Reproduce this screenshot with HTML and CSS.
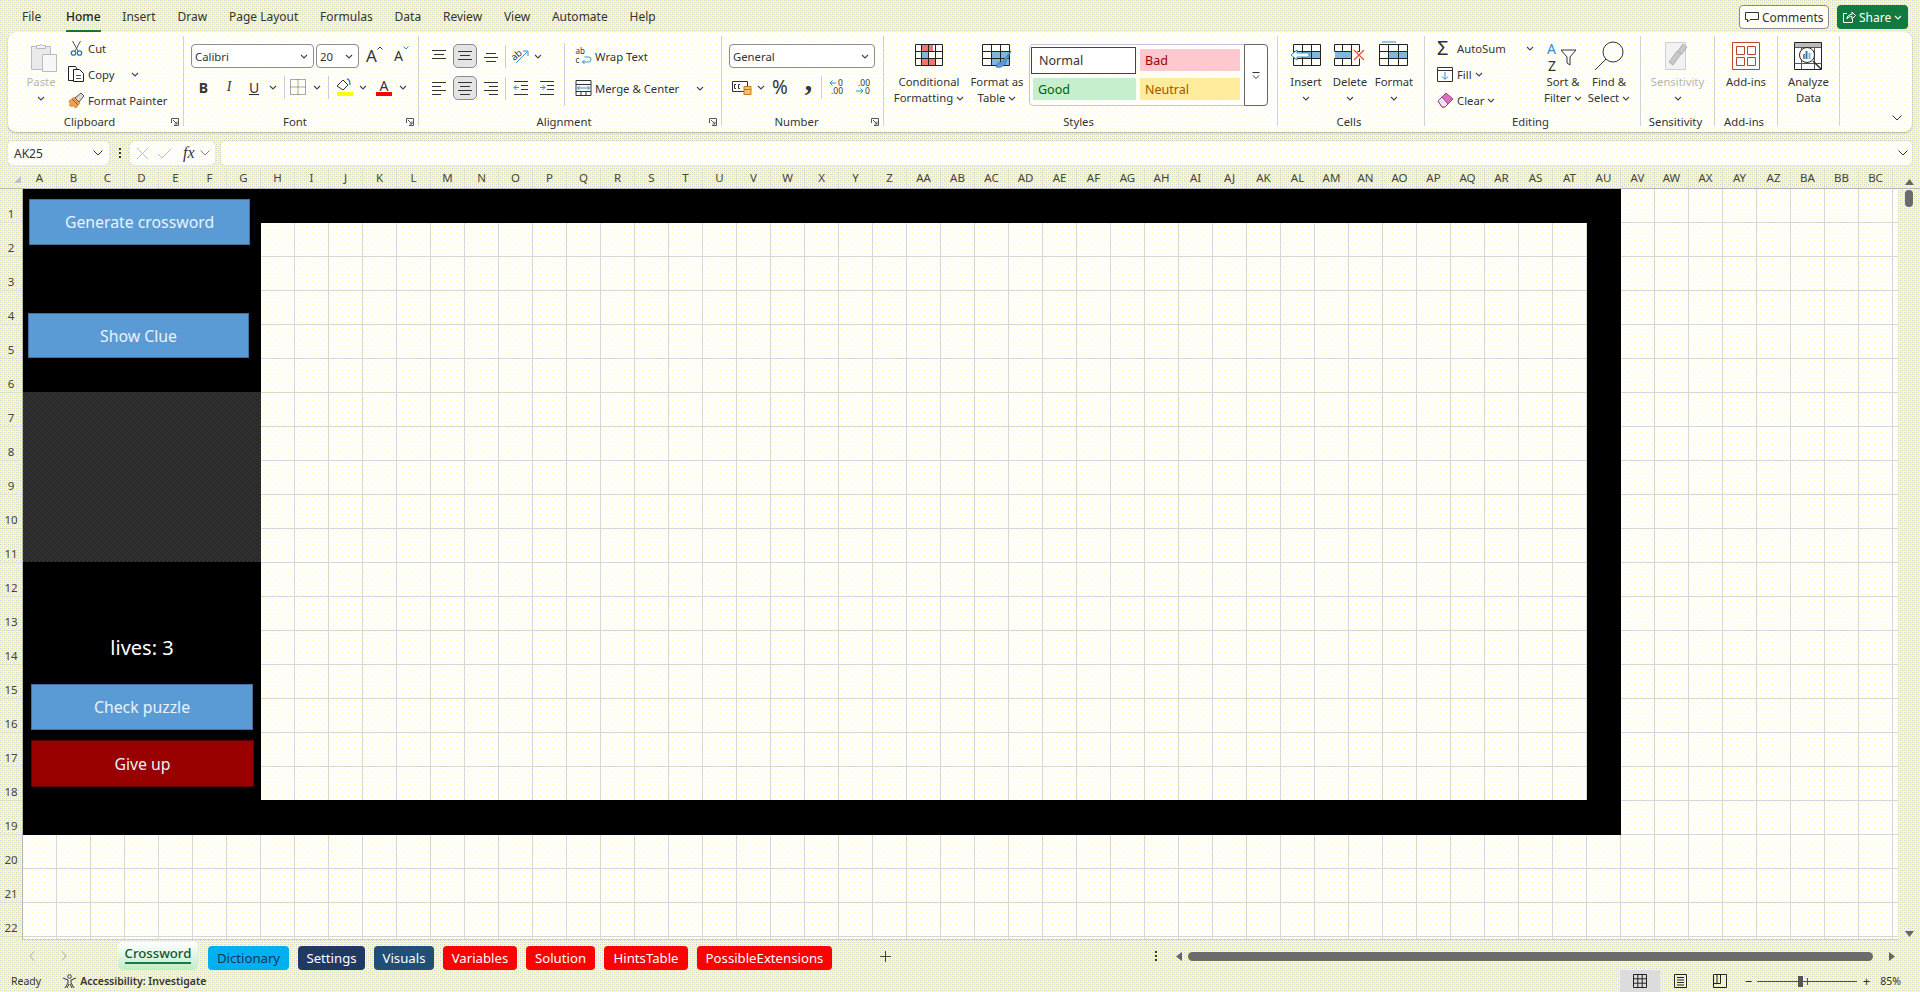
FILE: index.html
```html
<!DOCTYPE html>
<html>
<head>
	<title>Crossword - Excel</title>
	<link rel="stylesheet" href="styles.css">
</head>
<body>
<svg class="sprite" width="0" height="0">
	<symbol id="chev" viewBox="0 0 8 5"><path d="M1 1l3 3 3-3" fill="none" stroke="#444" stroke-width="1.1"/></symbol>
	<symbol id="launch" viewBox="0 0 8 8"><path d="M.5 5V.5H7.500V7.500H3M2 2l4 4M6 3.500V6H3.500" fill="none" stroke="#555"/></symbol>
	<symbol id="lines-top" viewBox="0 0 14 14"><path d="M0 1.500h14M2 5.500h10M0 9.500h14" stroke="#333"/></symbol>
	<symbol id="lines-mid" viewBox="0 0 14 14"><path d="M0 2.500h14M2 6.500h10M0 10.500h14" stroke="#333"/></symbol>
	<symbol id="lines-bot" viewBox="0 0 14 14"><path d="M2 4.500h10M0 8.500h14M2 12.500h10" stroke="#333"/></symbol>
	<symbol id="lines-left" viewBox="0 0 14 14"><path d="M0 1.500h14M0 5.500h9M0 9.500h14M0 13.500h9" stroke="#333"/></symbol>
	<symbol id="lines-center" viewBox="0 0 14 14"><path d="M0 1.500h14M2 5.500h10M0 9.500h14M2 13.500h10" stroke="#333"/></symbol>
	<symbol id="lines-right" viewBox="0 0 14 14"><path d="M0 1.500h14M5 5.500h9M0 9.500h14M5 13.500h9" stroke="#333"/></symbol>
</svg>

<div class="menu-bar">
	<nav class="menu">
		<span>File</span>
		<span class="menu-active">Home</span>
		<span>Insert</span>
		<span>Draw</span>
		<span>Page Layout</span>
		<span>Formulas</span>
		<span>Data</span>
		<span>Review</span>
		<span>View</span>
		<span>Automate</span>
		<span>Help</span>
	</nav>
	<div class="menu-actions">
		<div class="comments">
			<svg width="14" height="13" viewBox="0 0 14 13"><path d="M.5 1.500h13v7H5L2.500 11V8.500h-2z" fill="none" stroke="#333"/></svg>
			Comments
		</div>
		<div class="share">
			<svg width="14" height="14" viewBox="0 0 14 14"><path d="M5 3.500H1.500v9h9V9M5 9c0-3 2-4.500 5-4.500V2l3.500 3.500L10 9V6.500C8 6.500 6 7 5 9z" fill="none" stroke="#fff"/></svg>
			Share
			<svg class="chev" viewBox="0 0 8 5"><path d="M1 1l3 3 3-3" fill="none" stroke="#fff" stroke-width="1.100"/></svg>
		</div>
	</div>
</div>

<div class="ribbon">
	<!-- Clipboard -->
	<section class="group group-clipboard">
		<div class="group-body">
			<div class="big big-paste is-off">
				<svg width="28" height="33" viewBox="0 0 28 33"><path d="M1.500 5.500h19v23h-19z" fill="#eaeaea" stroke="#bbb"/><path d="M6.500 7.500v-3h3a2 2 0 0 1 3 0h3v3z" fill="#f4f4f4" stroke="#bbb"/><path d="M12.500 13.500h14v17h-14z" fill="#f7f7f7" stroke="#bbb"/></svg>
				<span>Paste</span>
				<svg class="chev" viewBox="0 0 8 5"><use href="#chev"/></svg>
			</div>
			<div class="small-col">
				<div class="small">
					<svg class="small-ico" width="16" height="17" viewBox="0 0 16 17"><path d="M4 1l5.500 10M12 1L6.500 11" stroke="#555" fill="none"/><circle cx="5" cy="13" r="2.200" fill="none" stroke="#2f78b5" stroke-width="1.300"/><circle cx="11" cy="13" r="2.200" fill="none" stroke="#2f78b5" stroke-width="1.300"/></svg>
					Cut
				</div>
				<div class="small">
					<svg class="small-ico" width="17" height="16" viewBox="0 0 17 16"><path d="M5.500 14.500h-5V.5h7l2 3" fill="none" stroke="#222"/><path d="M5.500 3.500h6l4 4v8h-10z" fill="#fff" stroke="#222"/><path d="M8 9.500h5M8 12.500h5" stroke="#555"/></svg>
					Copy
					<svg class="chev chev-copy" viewBox="0 0 8 5"><use href="#chev"/></svg>
				</div>
				<div class="small">
					<svg class="small-ico" width="17" height="17" viewBox="0 0 17 17"><path d="M1 9l5-4 6 6-4 5c-2-.5-2-2-3-2s-2 1-3 0 0-1.500 0-2-1-2-1-3z" fill="#eda04f" stroke="#c77a2a" stroke-width=".6"/><path d="M7 6l6-5 3 3-5 6z" fill="#d9d9d9" stroke="#555"/><path d="M4 7l6 6" stroke="#8a5a2b"/></svg>
					Format Painter
				</div>
			</div>
		</div>
		<div class="group-label"><span>Clipboard</span><svg class="launch"><use href="#launch"/></svg></div>
	</section>

	<!-- Font -->
	<section class="group group-font">
		<div class="group-body group-stack">
			<div class="font-row1">
				<div class="select select-font">Calibri<svg class="chev" viewBox="0 0 8 5"><use href="#chev"/></svg></div>
				<div class="select select-size">20<svg class="chev" viewBox="0 0 8 5"><use href="#chev"/></svg></div>
				<span class="grow-a">A<svg width="6" height="4" viewBox="0 0 6 4"><path d="M.5 3.500L3 1l2.500 2.500" fill="none" stroke="#333"/></svg></span>
				<span class="shrink-a">A<svg width="6" height="4" viewBox="0 0 6 4"><path d="M.5.5L3 3 5.500.5" fill="none" stroke="#2f8fd0"/></svg></span>
			</div>
			<div class="font-row2">
				<b class="tool">B</b>
				<i class="tool tool-serif">I</i>
				<span class="tool tool-u">U</span>
				<span class="tool"><svg class="chev" viewBox="0 0 8 5"><use href="#chev"/></svg></span>
				<span class="tool"><i class="vsep"></i></span>
				<span class="tool"><svg width="16" height="16" viewBox="0 0 16 16"><path d="M.5.5h15v15H.5zM8 .5v15M.5 8h15" fill="none" stroke="#555" stroke-dasharray="1 1"/></svg></span>
				<span class="tool"><svg class="chev" viewBox="0 0 8 5"><use href="#chev"/></svg></span>
				<span class="tool"><i class="vsep"></i></span>
				<span class="tool"><svg width="17" height="18" viewBox="0 0 17 18"><path d="M1 8l6-6 5 5-5 5z" fill="#fff" stroke="#333"/><path d="M11 1c3 0 3 4 3 6" fill="none" stroke="#2f78b5" stroke-width="1.300"/><path d="M1 14h16v4H1z" fill="#ff0"/></svg></span>
				<span class="tool"><svg class="chev" viewBox="0 0 8 5"><use href="#chev"/></svg></span>
				<span class="tool tool-color">A<i></i></span>
				<span class="tool"><svg class="chev" viewBox="0 0 8 5"><use href="#chev"/></svg></span>
			</div>
		</div>
		<div class="group-label"><span>Font</span><svg class="launch"><use href="#launch"/></svg></div>
	</section>

	<!-- Alignment -->
	<section class="group group-align">
		<div class="group-body">
			<div class="align-grid">
				<span class="tool"><svg class="ln"><use href="#lines-top"/></svg></span>
				<span class="tool tool-on"><svg class="ln"><use href="#lines-mid"/></svg></span>
				<span class="tool"><svg class="ln"><use href="#lines-bot"/></svg></span>
				<span class="tool"><i class="vsep"></i></span>
				<span class="tool"><svg width="17" height="16" viewBox="0 0 17 16"><text x="0" y="11" class="ico-text" transform="rotate(-40 4 9)">ab</text><path d="M4 15L15 4M11 3h5v5" fill="none" stroke="#2f8fd0"/></svg></span>
				<span class="tool tool-start"><svg class="chev" viewBox="0 0 8 5"><use href="#chev"/></svg></span>
				<span class="tool"><svg class="ln"><use href="#lines-left"/></svg></span>
				<span class="tool tool-on"><svg class="ln"><use href="#lines-center"/></svg></span>
				<span class="tool"><svg class="ln"><use href="#lines-right"/></svg></span>
				<span class="tool"><i class="vsep"></i></span>
				<span class="tool"><svg width="15" height="14" viewBox="0 0 15 14"><path d="M1 .5h14M8 4.500h7M8 8.500h7M1 13.500h14" stroke="#333"/><path d="M6 6.500H1M3.500 4L1 6.500 3.500 9" fill="none" stroke="#2f8fd0"/></svg></span>
				<span class="tool"><svg width="15" height="14" viewBox="0 0 15 14"><path d="M1 .5h14M8 4.500h7M8 8.500h7M1 13.500h14" stroke="#333"/><path d="M1 6.500h5M3.500 4L6 6.500 3.500 9" fill="none" stroke="#2f8fd0"/></svg></span>
			</div>
			<i class="group-sep"></i>
			<div class="wrap-col">
				<div class="small">
					<svg class="small-ico" width="16" height="16" viewBox="0 0 16 16"><text x="0" y="6" class="ico-wrap">ab</text><text x="0" y="15" class="ico-wrap">c</text><path d="M9 9h4a2 2 0 0 1 0 5H7M9 12l-2 2 2 2" fill="none" stroke="#2f8fd0"/></svg>
					Wrap Text
				</div>
				<div class="small">
					<svg class="small-ico" width="16" height="16" viewBox="0 0 16 16"><path d="M.5.5h15v15H.5zM.5 4.500h15M.5 11.500h15M5.500 11.500v4M10.500 11.500v4" fill="#fff" stroke="#333"/><path d="M2 8h12M4 6L2 8l2 2M12 6l2 2-2 2" fill="none" stroke="#2f8fd0"/></svg>
					Merge &amp; Center
					<svg class="chev chev-merge" viewBox="0 0 8 5"><use href="#chev"/></svg>
				</div>
			</div>
		</div>
		<div class="group-label"><span>Alignment</span><svg class="launch"><use href="#launch"/></svg></div>
	</section>

	<!-- Number -->
	<section class="group group-number">
		<div class="group-body group-stack">
			<div class="select select-number">General<svg class="chev" viewBox="0 0 8 5"><use href="#chev"/></svg></div>
			<div class="number-row">
				<span class="tool"><svg width="20" height="16" viewBox="0 0 20 16"><path d="M.5 2.500h15v10H.5z" fill="#fff" stroke="#333"/><path d="M4 5.500H2.500v4H4M8 5.500H6.500v4H8" fill="none" stroke="#333"/><path d="M12 7.500h7v8h-7z" fill="#f5c16c" stroke="#c87a1e"/><path d="M12 10.500h7" stroke="#c87a1e"/></svg></span>
				<span class="tool"><svg class="chev" viewBox="0 0 8 5"><use href="#chev"/></svg></span>
				<span class="tool tool-percent">%</span>
				<span class="tool tool-comma">,</span>
				<span class="tool"><i class="vsep"></i></span>
				<span class="tool"><svg width="16" height="16" viewBox="0 0 16 16"><path d="M7 4H1M3.500 1.500L1 4l2.500 2.500" fill="none" stroke="#2f8fd0"/><text x="9" y="7" class="ico-num">0</text><text x="2" y="15" class="ico-num">.00</text></svg></span>
				<span class="tool"><svg width="16" height="16" viewBox="0 0 16 16"><text x="3" y="7" class="ico-num">.00</text><path d="M1 12h7M5.500 9.500L8 12l-2.500 2.500" fill="none" stroke="#2f8fd0"/><text x="10" y="15" class="ico-num">0</text></svg></span>
			</div>
		</div>
		<div class="group-label"><span>Number</span><svg class="launch"><use href="#launch"/></svg></div>
	</section>

	<!-- Styles -->
	<section class="group group-styles">
		<div class="group-body">
			<div class="big big-cond">
				<svg width="28" height="33" viewBox="0 0 28 33"><path d="M6 3h12v7H6zM6 17h14v8H6z" fill="#f0776e"/><path d="M6 10h8v7H6z" fill="#7fb7de"/><path d="M.5 3.500h27v21H.5zM.5 10.500h27M.5 17.500h27M6.500 3.500v21M13.500 3.500v21M20.500 3.500v21" fill="none" stroke="#222"/></svg>
				<span>Conditional</span>
				<span>Formatting<svg class="chev chev-in" viewBox="0 0 8 5"><use href="#chev"/></svg></span>
			</div>
			<div class="big big-table">
				<svg width="30" height="33" viewBox="0 0 30 33"><path d="M10 10h18v14H10z" fill="#7fb7de"/><path d="M.5 3.500h27v21H.5zM.5 10.500h27M.5 17.500h27M9.500 3.500v21M18.500 3.500v21" fill="none" stroke="#222"/><path d="M14 26c1-5 4-5 6-5l9-11-6 13c-2 3-6 4-9 3z" fill="#5b9bd5" stroke="#2f6da3" stroke-width=".7"/></svg>
				<span>Format as</span>
				<span>Table<svg class="chev chev-in" viewBox="0 0 8 5"><use href="#chev"/></svg></span>
			</div>
			<div class="gallery">
				<div class="gallery-cells">
					<div class="style style-normal">Normal</div>
					<div class="style style-bad">Bad</div>
					<div class="style style-good">Good</div>
					<div class="style style-neutral">Neutral</div>
				</div>
				<div class="gallery-more"><svg width="8" height="8" viewBox="0 0 8 8"><path d="M.5.5h7M1 3.500l3 3 3-3" fill="none" stroke="#333"/></svg></div>
			</div>
		</div>
		<div class="group-label"><span>Styles</span></div>
	</section>

	<!-- Cells -->
	<section class="group group-cells">
		<div class="group-body">
			<div class="big">
				<svg width="32" height="33" viewBox="0 0 32 33"><path d="M11 10h20v7H11z" fill="#7fb7de"/><path d="M3.500 3.500h27v21h-27zM3.500 10.500h27M3.500 17.500h27M12.500 3.500v21M21.500 3.500v21" fill="none" stroke="#222"/><path d="M1 14l6-5v3h12v4H7v3z" fill="#fff" stroke="#2f8fd0"/></svg>
				<span>Insert</span>
				<svg class="chev" viewBox="0 0 8 5"><use href="#chev"/></svg>
			</div>
			<div class="big">
				<svg width="32" height="33" viewBox="0 0 32 33"><path d="M1 10h17v7H1z" fill="#7fb7de"/><path d="M.5 3.500h25v7h-2M.5 3.500v7h17v7H.5v7h25v-7M8.500 3.500v7M17.500 3.500v7M8.500 17.500v7M17.500 17.500v7" fill="none" stroke="#222"/><path d="M20 9l10 10M30 9L20 19" stroke="#e8503f" stroke-width="1.300"/></svg>
				<span>Delete</span>
				<svg class="chev" viewBox="0 0 8 5"><use href="#chev"/></svg>
			</div>
			<div class="big">
				<svg width="30" height="33" viewBox="0 0 30 33"><path d="M3 1h14" stroke="#2f8fd0"/><path d="M10 10h19v7H10z" fill="#7fb7de"/><path d="M.5 3.500h28v21H.5zM.5 10.500h28M.5 17.500h28M9.500 3.500v21M19.500 3.500v21" fill="none" stroke="#222"/></svg>
				<span>Format</span>
				<svg class="chev" viewBox="0 0 8 5"><use href="#chev"/></svg>
			</div>
		</div>
		<div class="group-label"><span>Cells</span></div>
	</section>

	<!-- Editing -->
	<section class="group group-editing">
		<div class="group-body">
			<div class="small-col small-col-edit">
				<div class="small">
					<span class="small-ico sigma">&Sigma;</span>
					AutoSum
					<svg class="chev chev-sum" viewBox="0 0 8 5"><use href="#chev"/></svg>
				</div>
				<div class="small">
					<svg class="small-ico" width="17" height="15" viewBox="0 0 17 15"><path d="M.5.5h15v14H.5z" fill="#fff" stroke="#333"/><path d="M.5 3.500h15" stroke="#333"/><path d="M8 5v7M5 9.500l3 3 3-3" fill="none" stroke="#2f8fd0"/></svg>
					Fill<svg class="chev chev-in" viewBox="0 0 8 5"><use href="#chev"/></svg>
				</div>
				<div class="small">
					<svg class="small-ico" width="17" height="16" viewBox="0 0 17 16"><path d="M1 9l8-8 7 6-8 8H5z" fill="#d96fc0" stroke="#9a3f8c"/><path d="M1 9l4-4 6 7-3 3H5z" fill="#f0e6f0" stroke="#9a3f8c"/></svg>
					Clear<svg class="chev chev-in" viewBox="0 0 8 5"><use href="#chev"/></svg>
				</div>
			</div>
			<div class="big big-narrow">
				<svg width="32" height="33" viewBox="0 0 32 33"><text x="0" y="13" class="ico-az ico-az-a">A</text><text x="1" y="30" class="ico-az">Z</text><path d="M14 9h15l-6 7v8l-3-2v-6z" fill="#fff" stroke="#333"/></svg>
				<span>Sort &amp;</span>
				<span>Filter<svg class="chev chev-in" viewBox="0 0 8 5"><use href="#chev"/></svg></span>
			</div>
			<div class="big big-narrow">
				<svg width="32" height="33" viewBox="0 0 32 33"><circle cx="20" cy="11" r="10" fill="none" stroke="#333"/><path d="M13 18L2 29" stroke="#333"/></svg>
				<span>Find &amp;</span>
				<span>Select<svg class="chev chev-in" viewBox="0 0 8 5"><use href="#chev"/></svg></span>
			</div>
		</div>
		<div class="group-label"><span>Editing</span></div>
	</section>

	<!-- Sensitivity -->
	<section class="group group-sens">
		<div class="group-body">
			<div class="big is-off">
				<svg width="30" height="33" viewBox="0 0 30 33"><path d="M2.500 1.500h20v27h-20z" fill="#f2f2f2" stroke="#cfcfd8"/><path d="M6 21l8-11 4 3-8 11zM15 10l5-7 4 3-5 7z" fill="#c9c9c9" stroke="#b0b0b0"/></svg>
				<span>Sensitivity</span>
				<svg class="chev" viewBox="0 0 8 5"><use href="#chev"/></svg>
			</div>
		</div>
		<div class="group-label"><span>Sensitivity</span></div>
	</section>

	<!-- Add-ins -->
	<section class="group group-addins">
		<div class="group-body">
			<div class="big">
				<svg width="28" height="33" viewBox="0 0 28 33"><path d="M.5 1.500h27v27H.5z" fill="#fff" stroke="#b7472a"/><path d="M4.500 5.500h8v8h-8zM15.500 5.500h8v8h-8zM4.500 16.500h8v8h-8zM15.500 16.500h8v8h-8z" fill="none" stroke="#b7472a"/></svg>
				<span>Add-ins</span>
			</div>
		</div>
		<div class="group-label"><span>Add-ins</span></div>
	</section>

	<!-- Analyze -->
	<section class="group group-analyze">
		<div class="group-body">
			<div class="big">
				<svg width="29" height="33" viewBox="0 0 29 33"><path d="M.5 1.500h27v27H.5z" fill="#fff" stroke="#222"/><path d="M1 2h26v4H1z" fill="#bbb"/><path d="M.5 6.500h27M.5 22.500h27M7.500 6.500v22M20.500 6.500v22" fill="none" stroke="#555"/><circle cx="13" cy="14" r="7.500" fill="#fff" stroke="#222"/><path d="M9 13h2v5H9z" fill="#888"/><path d="M11.500 10h2v8h-2z" fill="#2f78b5"/><path d="M14.500 12h2v6h-2z" fill="#7fb7de"/><path d="M19 20l8 8" stroke="#222" stroke-width="1.300"/></svg>
				<span>Analyze</span>
				<span>Data</span>
			</div>
		</div>
	</section>

	<div class="ribbon-end">
		<svg width="10" height="6" viewBox="0 0 10 6"><path d="M.5.5L5 5 9.500.5" fill="none" stroke="#333"/></svg>
	</div>
</div>

<div class="formula-bar">
	<div class="name-box">AK25<svg class="chev-lg" viewBox="0 0 10 6"><path d="M.5.5L5 5 9.500.5" fill="none" stroke="#333"/></svg></div>
	<div class="fx-dots"><i></i><i></i><i></i></div>
	<div class="fx-box">
		<svg width="13" height="13" viewBox="0 0 13 13"><path d="M1 1l11 11M12 1L1 12" stroke="#bbb"/></svg>
		<svg width="15" height="11" viewBox="0 0 15 11"><path d="M1 6l4 4 9-9" fill="none" stroke="#bbb"/></svg>
		<span class="fx">fx</span>
		<svg class="chev-lg" viewBox="0 0 10 6"><path d="M.5.5L5 5 9.500.5" fill="none" stroke="#888"/></svg>
	</div>
	<div class="formula-input"><svg class="chev-lg" viewBox="0 0 10 6"><path d="M.5.5L5 5 9.500.5" fill="none" stroke="#333"/></svg></div>
</div>

<div class="col-heads">
	<div class="corner"><svg width="7" height="7" viewBox="0 0 7 7"><path d="M7 0v7H0z" fill="#bfbfbf"/></svg></div>
	<span>A</span><span>B</span><span>C</span><span>D</span><span>E</span><span>F</span><span>G</span><span>H</span><span>I</span><span>J</span><span>K</span><span>L</span><span>M</span><span>N</span><span>O</span><span>P</span><span>Q</span><span>R</span><span>S</span><span>T</span><span>U</span><span>V</span><span>W</span><span>X</span><span>Y</span><span>Z</span>
	<span>AA</span><span>AB</span><span>AC</span><span>AD</span><span>AE</span><span>AF</span><span>AG</span><span>AH</span><span>AI</span><span>AJ</span><span>AK</span><span>AL</span><span>AM</span><span>AN</span><span>AO</span><span>AP</span><span>AQ</span><span>AR</span><span>AS</span><span>AT</span><span>AU</span><span>AV</span><span>AW</span><span>AX</span><span>AY</span><span>AZ</span><span>BA</span><span>BB</span><span>BC</span>
</div>

<div class="sheet-area">
	<div class="row-heads">
		<span>1</span><span>2</span><span>3</span><span>4</span><span>5</span><span>6</span><span>7</span><span>8</span><span>9</span><span>10</span><span>11</span>
		<span>12</span><span>13</span><span>14</span><span>15</span><span>16</span><span>17</span><span>18</span><span>19</span><span>20</span><span>21</span><span>22</span>
	</div>
	<div class="sheet">
		<div class="board">
			<div class="side">
				<div class="shape shape-generate">Generate crossword</div>
				<div class="shape shape-clue">Show Clue</div>
				<div class="clue-panel"></div>
				<div class="lives">lives: 3</div>
				<div class="shape shape-check">Check puzzle</div>
				<div class="shape shape-giveup">Give up</div>
			</div>
			<div class="puzzle"></div>
		</div>
	</div>
	<div class="vscroll">
		<svg width="9" height="6" viewBox="0 0 9 6"><path d="M4.500 0L9 6H0z" fill="#666"/></svg>
		<i class="vthumb"></i>
		<svg class="vscroll-down" width="9" height="6" viewBox="0 0 9 6"><path d="M4.500 6L9 0H0z" fill="#666"/></svg>
	</div>
</div>

<div class="tab-bar">
	<div class="tab-nav">
		<svg width="6" height="10" viewBox="0 0 6 10"><path d="M5 .5L1 5l4 4.500" fill="none" stroke="#aaa"/></svg>
		<svg width="6" height="10" viewBox="0 0 6 10"><path d="M1 .5L5 5 1 9.500" fill="none" stroke="#aaa"/></svg>
	</div>
	<div class="tabs">
		<div class="tab tab-crossword"><span>Crossword</span></div>
		<div class="tab tab-dictionary">Dictionary</div>
		<div class="tab tab-settings">Settings</div>
		<div class="tab tab-visuals">Visuals</div>
		<div class="tab tab-red tab-variables">Variables</div>
		<div class="tab tab-red tab-solution">Solution</div>
		<div class="tab tab-red tab-hints">HintsTable</div>
		<div class="tab tab-red tab-ext">PossibleExtensions</div>
	</div>
	<svg class="tab-add" width="11" height="11" viewBox="0 0 11 11"><path d="M5.500 0v11M0 5.500h11" stroke="#444"/></svg>
	<div class="fx-dots tab-dots"><i></i><i></i><i></i></div>
	<svg class="hscroll-arrow" width="6" height="9" viewBox="0 0 6 9"><path d="M6 0v9L0 4.500z" fill="#666"/></svg>
	<i class="hthumb"></i>
	<svg class="hscroll-arrow" width="6" height="9" viewBox="0 0 6 9"><path d="M0 0v9l6-4.500z" fill="#666"/></svg>
</div>

<div class="status-bar">
	<span class="ready">Ready</span>
	<svg class="a11y-ico" width="15" height="15" viewBox="0 0 15 15"><circle cx="7.500" cy="2.500" r="1.800" fill="none" stroke="#333"/><path d="M1 4l5 2v3l-3 5M14 4L9 6v3l3 5M7 10l-2 4M8 10l2 4" fill="none" stroke="#333"/></svg>
	<b class="a11y">Accessibility: Investigate</b>
	<div class="views">
		<span class="view view-on"><svg width="14" height="14" viewBox="0 0 14 14"><path d="M.5.5h13v13H.5zM4.800.5v13M9.200.5v13M.5 4.800h13M.5 9.200h13" fill="none" stroke="#222"/></svg></span>
		<span class="view"><svg width="13" height="14" viewBox="0 0 13 14"><path d="M.5.5h12v13H.5z" fill="none" stroke="#222"/><path d="M3 3.500h7M3 6h7M3 8.500h7M3 11h7" stroke="#222"/></svg></span>
		<span class="view"><svg width="14" height="14" viewBox="0 0 14 14"><path d="M.5.5h13v13H.5zM.5 9.500h7M7.500.5v9M4 .5v9" fill="none" stroke="#222"/></svg></span>
	</div>
	<div class="zoom">
		<span class="zoom-sign">&minus;</span>
		<div class="zoom-track"><i class="zoom-thumb"></i><i class="zoom-tick"></i></div>
		<span class="zoom-sign">+</span>
		<span class="zoom-value">85%</span>
	</div>
</div>
</body>
</html>
```

FILE: styles.css
```css
*{
	box-sizing: border-box;
}
html,body{
	margin: 0;
	padding: 0;
}
body{
	--lilac: #c9c9ea;
	--yellow: #eeee98;
	--dot: #ffffb8;
	width: 1920px;
	height: 992px;
	overflow: hidden;
	display: flex;
	flex-direction: column;
	font-family: "Noto Sans", "Open Sans", sans-serif;
	font-size: 11.3px;
	color: #333;
	/* the screenshot is a gif, so the grey chrome is dithered */
	background:
		conic-gradient(from 0deg at 1px 1px, transparent 75%, var(--lilac) 0) 0 0/4px 4px,
		conic-gradient(from 0deg at 1px 1px, transparent 75%, var(--lilac) 0) 2px 2px/4px 4px,
		conic-gradient(from 0deg at 1px 1px, transparent 75%, var(--yellow) 0) 2px 0/4px 4px,
		conic-gradient(from 0deg at 1px 1px, transparent 75%, var(--yellow) 0) 0 2px/4px 4px,
		#f3f3f3;
}
.sprite{
	position: absolute;
}
svg{
	display: block;
	flex: none;
	overflow: visible;
}
.chev{
	width: 8px;
	height: 5px;
}
.chev-lg{
	width: 10px;
	height: 6px;
}
.chev-in{
	display: inline-block;
	margin-left: 3px;
	vertical-align: 1px;
}
.launch{
	width: 8px;
	height: 8px;
}
.ln{
	width: 14px;
	height: 14px;
}

/* top menu */
.menu-bar{
	height: 32px;
	display: flex;
	justify-content: space-between;
	padding: 5px 12px 0 22px;
}
.menu{
	display: flex;
	gap: 21.8px;
	font-size: 12px;
	line-height: 24px;
	height: 27px;
}
.menu-active{
	margin-left: 3px;
	font-weight: 500;
	color: #222;
	border-bottom: 2px solid #1e6e42;
}
.menu-actions{
	display: flex;
	gap: 8px;
	height: 24px;
}
.comments,.share{
	display: flex;
	align-items: center;
	gap: 3px;
	font-size: 12px;
	border-radius: 4px;
}
.comments{
	width: 90px;
	padding-left: 5px;
	border: 1px solid #8a8a8a;
}
.share{
	width: 71px;
	padding-left: 5px;
	color: #fff;
	background: #117a3e;
}

/* ribbon */
.ribbon{
	height: 100px;
	margin: 0 8px;
	padding-top: 4px;
	display: flex;
	border-radius: 8px;
	box-shadow: 0 1px 2px rgba(0,0,0,.25);
}
.ribbon,.formula-bar > div:not(.fx-dots),.comments{
	background:
		conic-gradient(from 0deg at 1px 1px, transparent 75%, var(--dot) 0) 0 0/6px 6px,
		conic-gradient(from 0deg at 1px 1px, transparent 75%, var(--dot) 0) 3px 3px/6px 6px,
		#fff;
}
.group{
	height: 90px;
	border-right: 1px solid #d2d2d2;
}
.group-clipboard{ width: 176px; }
.group-font{ width: 235px; }
.group-align{ width: 303px; }
.group-number{ width: 162px; }
.group-styles{ width: 394px; }
.group-cells{ width: 147px; }
.group-editing{ width: 216px; }
.group-sens{ width: 74px; }
.group-addins{ width: 63px; }
.group-analyze{ width: 62px; }
.group-body{
	height: 82px;
	display: flex;
	white-space: nowrap;
}
.group-stack{
	flex-direction: column;
}
.group-label{
	height: 8px;
	line-height: 16px;
	display: flex;
	align-items: center;
	padding-right: 4px;
}
.group-label span{
	flex: 1;
	text-align: center;
}
.group-cells .group-body{
	padding-left: 6px;
}
.ribbon-end{
	flex: 1;
	display: flex;
	justify-content: flex-end;
	align-items: flex-end;
	padding: 0 10px 11px 0;
}

.big{
	display: flex;
	flex-direction: column;
	align-items: center;
	width: 44px;
	padding-top: 5px;
	line-height: 16px;
}
.big svg.chev{
	margin-top: 6px;
}
.big svg.chev-in{
	margin-top: 0;
}
.is-off{
	color: #b5b5b5;
}
.big-paste{
	width: 54px;
	margin-left: 6px;
}
.big-paste > svg:first-child{
	margin-left: 5px;
}
.small-col{
	display: flex;
	flex-direction: column;
	margin-top: -1px;
}
.small{
	height: 26px;
	display: flex;
	align-items: center;
}
.small-ico{
	width: 20px;
	padding-right: 3px;
	flex: none;
}
svg.small-ico{
	width: 17px;
	margin-right: 3px;
	padding: 0;
}
.chev-copy{ margin-left: 17px; }
.chev-sum{ margin-left: 20px; }
.chev-merge{ margin-left: 17px; }
.sigma{
	font-size: 20px;
	line-height: 20px;
	color: #333;
}
.ico-text{
	font: 9.5px "Noto Sans", sans-serif;
	fill: #333;
}
.ico-wrap{
	font: 8px/1 "Noto Sans", sans-serif;
	fill: #333;
}
.ico-num{
	font: 8.5px "Noto Sans", sans-serif;
	fill: #333;
}
.ico-az{
	font: 14px/1 "Noto Sans", sans-serif;
	fill: #333;
}
.ico-az-a{
	fill: #2f8fd0;
}

/* selects and small buttons */
.select{
	height: 24px;
	padding: 0 5px 0 3px;
	display: flex;
	align-items: center;
	justify-content: space-between;
	border: 1px solid #8d8d8d;
	border-radius: 4px;
	background: #fff;
}
.select-font{ width: 123px; }
.select-size{ width: 43px; }
.select-number{
	width: 146px;
	margin: 8px 0 0 7px;
}
.tool{
	display: flex;
	align-items: center;
	justify-content: center;
	height: 24px;
	font-size: 14px;
}
.tool-start{
	justify-content: flex-start;
}
.tool-on{
	background: #e4e4e4;
	border: 1px solid #8a8a8a;
	border-radius: 5px;
}
.tool-serif{
	font-family: "Liberation Serif", serif;
}
.tool-u{
	text-decoration: underline;
}
.tool-color{
	flex-direction: column;
	line-height: 13px;
	font-size: 14px;
}
.tool-color i{
	width: 16px;
	height: 4px;
	background: #f00;
}
.tool-percent{
	font-size: 19px;
}
.tool-comma{
	padding: 0 0 14px 9px;
	font: 700 30px/10px "Liberation Serif", serif;
}
.vsep{
	width: 1px;
	height: 23px;
	background: #cfcfcf;
}
.font-row1{
	display: flex;
	align-items: center;
	gap: 2px;
	margin: 8px 0 0 7px;
}
.grow-a,.shrink-a{
	display: flex;
	font-size: 17px;
	line-height: 20px;
}
.grow-a{
	margin-left: 5px;
}
.shrink-a{
	margin-left: 9px;
	font-size: 14px;
}
.font-row2{
	display: grid;
	grid-template-columns: 25px 26px 24px 14px 9px 18px 20px 3px 28px 10px 32px 6px;
	margin: 7px 0 0 7px;
}
.align-grid{
	display: grid;
	grid-template-columns: 28px 24px 28px 1px 28px 24px;
	grid-auto-rows: 24px;
	row-gap: 8px;
	margin: 8px 0 0 6px;
}
.group-sep{
	width: 1px;
	height: 63px;
	margin: 7px 0 0 6px;
	background: #cfcfcf;
}
.wrap-col{
	margin: 8px 0 0 10px;
	display: flex;
	flex-direction: column;
	gap: 8px;
}
.wrap-col .small{
	height: 24px;
}
.number-row{
	display: grid;
	grid-template-columns: 26px 11px 28px 20px 15px 15px 10px 18px;
	margin: 7px 0 0 7px;
}
.number-row .tool:nth-child(n+7){
	grid-column: 8;
}
.number-row .tool:nth-child(6){
	grid-column: 6 / span 2;
	justify-content: flex-start;
}

/* style gallery */
.big-cond{
	width: 90px;
}
.big-table{
	width: 46px;
}
.gallery{
	width: 239px;
	height: 62px;
	margin: 8px 0 0 9px;
	display: flex;
	border: 1px solid #c4c4d4;
	border-radius: 4px;
}
.gallery-cells{
	width: 214px;
	display: grid;
	grid-template-columns: 108px 106px;
	grid-template-rows: 31px 30px;
	padding-left: 1px;
}
.style{
	display: flex;
	align-items: center;
	padding-left: 5px;
	font-size: 12.5px;
	margin: 4px 5px 5px 1px;
}
.style-normal{
	margin: 2px 3px 2px 0;
	padding-left: 7px;
	background: #fff;
	border: 1px solid #444;
}
.style-bad{ background: #ffc7ce; color: #9c0006; }
.style-good{ background: #c6efce; color: #006100; margin: 2px 3px 6px 2px; }
.style-neutral{ background: #ffeb9c; color: #9c5700; margin-top: 2px; margin-bottom: 6px; }
.gallery-more{
	flex: 1;
	margin: -1px -1px -1px 0;
	display: flex;
	align-items: flex-start;
	justify-content: center;
	padding-top: 27px;
	background: #fff;
	border: 1px solid #666;
	border-radius: 0 4px 4px 0;
}

.small-col-edit{
	width: 115px;
	padding-left: 12px;
}
.big-narrow{
	width: 46px;
}
.group-sens .big,.group-addins .big,.group-analyze .big{
	width: 100%;
}

/* formula bar */
.formula-bar{
	height: 24px;
	margin: 9px 8px 0;
	display: flex;
}
.formula-bar > div:not(.fx-dots){
	display: flex;
	align-items: center;
	border-radius: 4px;
	box-shadow: 0 0 1px rgba(0,0,0,.35);
}
.name-box{
	width: 101px;
	padding: 0 6px;
	justify-content: space-between;
	font-size: 12px;
}
.fx-dots{
	width: 21px;
	display: flex;
	flex-direction: column;
	align-items: center;
	justify-content: center;
	gap: 2px;
}
.fx-dots i{
	width: 2px;
	height: 2px;
	background: #333;
}
.fx-box{
	width: 85px;
	padding: 0 1px 0 6px;
	gap: 8px;
}
.fx{
	font: italic 16px "Liberation Serif", serif;
	color: #333;
	margin-left: 3px;
}
.fx-box .chev-lg{
	margin-left: -3px;
}
.formula-input{
	flex: 1;
	margin-left: 6px;
	justify-content: flex-end;
	padding-right: 4px;
}

/* headers */
.col-heads{
	height: 24px;
	display: flex;
	align-items: flex-end;
	border-bottom: 1px solid #b5b5b5;
	font-size: 11.5px;
	color: #444;
}
.col-heads span{
	width: 34px;
	height: 20px;
	line-height: 20px;
	text-align: center;
	border-right: 1px solid #dcdcd4;
}
.corner{
	width: 23px;
	height: 20px;
	padding: 8px 0 0 14px;
}
.sheet-area{
	height: 751px;
	display: flex;
}
.row-heads{
	width: 23px;
	display: flex;
	flex-direction: column;
	border-right: 1px solid #b5b5b5;
	font-size: 11.5px;
	color: #444;
}
.row-heads span{
	height: 34px;
	flex: none;
	display: flex;
	align-items: flex-end;
	justify-content: center;
	padding-bottom: 1px;
	border-bottom: 1px solid #dcdcd4;
}
.sheet{
	width: 1875px;
	border-bottom: 1px solid #cfcfcf;
}
.sheet,.puzzle{
	background:
		linear-gradient(to right, transparent 33px, #d8d8d0 33px) 0 0/34px 34px,
		linear-gradient(to bottom, transparent 33px, #d8d8d0 33px) 0 0/34px 34px,
		conic-gradient(from 0deg at 1px 1px, transparent 75%, var(--dot) 0) 0 0/6px 6px,
		conic-gradient(from 0deg at 1px 1px, transparent 75%, var(--dot) 0) 3px 3px/6px 6px,
		#fff;
}
.board{
	width: 1598px;
	height: 646px;
	display: flex;
	background: #000;
}
.side{
	width: 238px;
	display: flex;
	flex-direction: column;
}
.puzzle{
	width: 1326px;
	height: 577px;
	margin-top: 34px;
}
.shape{
	display: flex;
	align-items: center;
	justify-content: center;
	color: #eaf2fb;
	font-size: 15.8px;
	background: #5b9bd5;
	border: 1px solid #41719c;
}
.shape-generate{
	width: 221px;
	height: 46px;
	margin: 10px 0 0 6px;
}
.shape-clue{
	width: 221px;
	height: 45px;
	margin: 68px 0 0 5px;
}
.clue-panel{
	height: 170px;
	margin-top: 34px;
	background:
		conic-gradient(from 0deg at 1px 1px, transparent 75%, #3d3d50 0) 0 0/4px 4px,
		conic-gradient(from 0deg at 1px 1px, transparent 75%, #45452e 0) 2px 2px/4px 4px,
		#2a2a2a;
}
.lives{
	height: 30px;
	margin-top: 71px;
	line-height: 30px;
	text-align: center;
	color: #fff;
	font-size: 20px;
}
.shape-check{
	width: 222px;
	height: 46px;
	margin: 21px 0 0 8px;
}
.shape-giveup{
	width: 223px;
	height: 47px;
	margin: 10px 0 0 8px;
	background: #990000;
	border-color: #5c0000;
}
.vscroll{
	flex: 1;
	display: flex;
	flex-direction: column;
	align-items: center;
}
.vscroll > svg:first-child{
	margin-top: -10px;
}
.vthumb{
	width: 8px;
	height: 17px;
	margin-top: 5px;
	background: #6b6b6b;
	border-radius: 4px;
}
.vscroll-down{
	margin-top: auto;
	margin-bottom: 3px;
}

/* sheet tabs */
.tab-bar{
	height: 30px;
	display: flex;
	align-items: center;
	padding-top: 2px;
}
.tab-nav{
	width: 118px;
	display: flex;
	gap: 26px;
	padding-left: 29px;
}
.tabs{
	width: 714px;
	display: flex;
	align-items: flex-end;
	gap: 9px;
	height: 28px;
	font-size: 13.2px;
}
.tab{
	height: 24px;
	display: flex;
	align-items: center;
	justify-content: center;
	border-radius: 4px;
	color: #fff;
	flex: none;
}
.tab-crossword{
	width: 80px;
	height: 28px;
	margin-right: 1px;
	color: #14532d;
	font-weight: 500;
	background: linear-gradient(#ffffff, #bfecc9);
	border-radius: 4px 4px 5px 5px;
}
.tab-crossword span{
	margin-bottom: 4px;
	border-bottom: 2px solid #1e7a45;
}
.tab-dictionary{ width: 81px; background: #00b0f0; color: #12355b; }
.tab-settings{ width: 67px; background: #1f3864; }
.tab-visuals{ width: 60px; background: #1f4e79; }
.tab-red{ background: #f00; }
.tab-variables{ width: 74px; }
.tab-solution{ width: 69px; }
.tab-hints{ width: 84px; }
.tab-ext{ width: 135px; }
.tab-add{
	margin-left: 48px;
}
.tab-dots{
	margin-left: 254px;
}
.hscroll-arrow{
	margin-left: 10px;
}
.hthumb{
	width: 685px;
	height: 9px;
	margin-left: 6px;
	border-radius: 5px;
	background: #6b6b6b;
}
.hthumb + .hscroll-arrow{
	margin-left: 16px;
}

/* status bar */
.status-bar{
	height: 22px;
	display: flex;
	align-items: center;
	padding-left: 11px;
	font-size: 10.5px;
}
.a11y-ico{
	margin-left: 21px;
}
.a11y{
	margin-left: 3px;
	font-weight: 600;
}
.views{
	display: flex;
	align-self: stretch;
	margin-left: 1414px;
}
.view{
	width: 40px;
	display: flex;
	align-items: center;
	justify-content: center;
}
.view-on{
	background: #dcdcdc;
}
.zoom{
	display: flex;
	align-items: center;
	margin-left: 3px;
}
.zoom-sign{
	width: 10px;
	text-align: center;
	font-size: 13px;
}
.zoom-track{
	position: relative;
	width: 100px;
	height: 1px;
	margin: 0 4px;
	background: #555;
}
.zoom-thumb{
	position: absolute;
	left: 41px;
	top: -5px;
	width: 5px;
	height: 11px;
	background: #555;
}
.zoom-tick{
	position: absolute;
	left: 50px;
	top: -3px;
	width: 1px;
	height: 7px;
	background: #555;
}
.zoom-value{
	margin-left: 9px;
}
```
